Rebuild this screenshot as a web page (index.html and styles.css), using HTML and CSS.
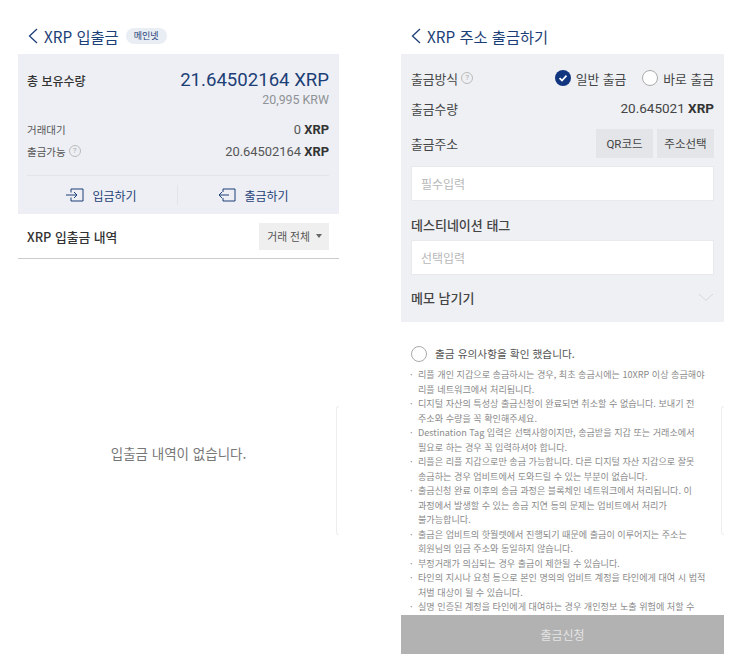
FILE: index.html
```html
<!DOCTYPE html>
<html lang="ko">
<head>
    <meta charset="UTF-8">
    <meta name="viewport" content="width=device-width, initial-scale=1.0">
    <title>XRP 입출금</title>
    <link rel="stylesheet" href="styles.css">
</head>
<body>
    <div class="screens">
        <div class="screen screen-left">
            <div class="title-bar">
                <svg class="back" width="12" height="18" viewBox="0 0 12 18"><path d="M10 2 2.5 9l7.500 7"/></svg>
                <h2>XRP 입출금</h2>
                <span class="net-badge">메인넷</span>
            </div>
            <div class="summary">
                <div class="row total-row">
                    <span class="total-label">총 보유수량</span>
                    <span class="total-value">21.64502164 XRP</span>
                </div>
                <div class="krw">20,995 KRW</div>
                <div class="row small-row wait-row">
                    <span>거래대기</span>
                    <span class="num">0 <b>XRP</b></span>
                </div>
                <div class="row small-row avail-row">
                    <span class="with-help">출금가능 <i class="help">?</i></span>
                    <span class="num">20.64502164 <b>XRP</b></span>
                </div>
                <div class="actions">
                    <a class="action">
                        <svg width="18" height="14" viewBox="0 0 18 14"><path d="M5 1h12v12H5V9.500M5 4.500V1M0 7h11M8 4l3 3-3 3"/></svg>
                        입금하기
                    </a>
                    <a class="action">
                        <svg width="18" height="14" viewBox="0 0 18 14"><path d="M5 4V1h12v12H5v-3M1 7h10M4 4 1 7l3 3"/></svg>
                        출금하기
                    </a>
                </div>
            </div>
            <div class="history-head">
                <span class="history-title">XRP 입출금 내역</span>
                <span class="filter">거래 전체 <i class="caret"></i></span>
            </div>
            <div class="empty">입출금 내역이 없습니다.</div>
            <div class="edge-handle"></div>
        </div>

        <div class="screen screen-right">
            <div class="title-bar">
                <svg class="back" width="12" height="18" viewBox="0 0 12 18"><path d="M10 2 2.500 9l7.500 7"/></svg>
                <h2>XRP 주소 출금하기</h2>
            </div>
            <form class="withdraw">
                <div class="row method-row">
                    <span class="field-label with-help">출금방식 <i class="help">?</i></span>
                    <div class="methods">
                        <span class="method">
                            <svg width="16" height="16" viewBox="0 0 16 16"><circle cx="8" cy="8" r="8" fill="#12357f"/><path d="M4.500 8.200 7 10.500l4.500-4.800" fill="none" stroke="#fff" stroke-width="1.700"/></svg>
                            일반 출금
                        </span>
                        <span class="method">
                            <i class="radio"></i>
                            바로 출금
                        </span>
                    </div>
                </div>
                <div class="row amount-row">
                    <span class="field-label">출금수량</span>
                    <span class="amount">20.645021 <b>XRP</b></span>
                </div>
                <div class="row address-row">
                    <span class="field-label">출금주소</span>
                    <div class="address-btns">
                        <span class="gray-btn qr-btn">QR코드</span>
                        <span class="gray-btn">주소선택</span>
                    </div>
                </div>
                <div class="fake-input">필수입력</div>
                <div class="field-label strong tag-label">데스티네이션 태그</div>
                <div class="fake-input">선택입력</div>
                <div class="row memo-row">
                    <span class="field-label strong">메모 남기기</span>
                    <svg width="16" height="9" viewBox="0 0 16 9"><path d="M1 1l7 6.500L15 1" fill="none" stroke="#d5d8de"/></svg>
                </div>
            </form>
            <div class="confirm">
                <i class="radio radio-big"></i>
                출금 유의사항을 확인 했습니다.
            </div>
            <ul class="notes">
                <li>리플 개인 지갑으로 송금하시는 경우, 최초 송금시에는 10XRP 이상 송금해야<br>리플 네트워크에서 처리됩니다.</li>
                <li>디지털 자산의 특성상 출금신청이 완료되면 취소할 수 없습니다. 보내기 전<br>주소와 수량을 꼭 확인해주세요.</li>
                <li>Destination Tag 입력은 선택사항이지만, 송금받을 지갑 또는 거래소에서<br>필요로 하는 경우 꼭 입력하셔야 합니다.</li>
                <li>리플은 리플 지갑으로만 송금 가능합니다. 다른 디지털 자산 지갑으로 잘못<br>송금하는 경우 업비트에서 도와드릴 수 있는 부분이 없습니다.</li>
                <li>출금신청 완료 이후의 송금 과정은 블록체인 네트워크에서 처리됩니다. 이<br>과정에서 발생할 수 있는 송금 지연 등의 문제는 업비트에서 처리가<br>불가능합니다.</li>
                <li>출금은 업비트의 핫월렛에서 진행되기 때문에 출금이 이루어지는 주소는<br>회원님의 입금 주소와 동일하지 않습니다.</li>
                <li>부정거래가 의심되는 경우 출금이 제한될 수 있습니다.</li>
                <li>타인의 지시나 요청 등으로 본인 명의의 업비트 계정을 타인에게 대여 시 법적<br>처벌 대상이 될 수 있습니다.</li>
                <li>실명 인증된 계정을 타인에게 대여하는 경우 개인정보 노출 위험에 처할 수</li>
            </ul>
            <button type="button" class="submit-btn">출금신청</button>
            <div class="edge-handle"></div>
        </div>
    </div>
</body>
</html>
```

FILE: styles.css
```css
html, body {
    height: 100%;
    overflow: hidden;
}

body {
    margin: 0;
    background: white;
    color: #333;
    font-family: "Noto Sans CJK KR", "Noto Sans", sans-serif;
}

.screens {
    display: flex;
    height: 655px;
    padding-left: 18px;
    box-sizing: border-box;
}

.screen {
    position: relative;
    display: flex;
    flex-direction: column;
    height: 655px;
}

.screen-left {
    width: 321px;
    margin-right: 62px;
}

.screen-right {
    width: 323px;
}

.row {
    display: flex;
    justify-content: space-between;
    align-items: center;
}

.title-bar {
    display: flex;
    align-items: center;
    height: 36px;
    padding: 18px 0 0 9px;
    flex: none;
}

.title-bar h2 {
    margin: 0 0 0 5px;
    font-size: 15.300px;
    font-weight: 400;
    color: #1d3f77;
}

.back {
    fill: none;
    stroke: #1d3f77;
    stroke-width: 1.3;
}

.net-badge {
    margin-left: 7px;
    padding: 2px 8px;
    background: #e9edf4;
    border-radius: 9px;
    font-size: 9px;
    line-height: 12px;
    color: #1d3f77;
}

/* left screen */
.summary {
    height: 160px;
    padding: 0 10px 0 9px;
    background: #edeff4;
    box-sizing: border-box;
}

.total-row {
    height: 40px;
    padding-top: 12px;
    box-sizing: border-box;
}

.total-label {
    font-size: 12px;
    font-weight: 500;
}

.total-value {
    font-family: Roboto, sans-serif;
    font-size: 18.600px;
    color: #1d3f77;
}

.krw {
    margin-top: -2px;
    text-align: right;
    font-family: Roboto, sans-serif;
    font-size: 12.400px;
    line-height: 16px;
    color: #8f9296;
}

.small-row {
    height: 22px;
    font-size: 10.500px;
    color: #555;
}

.wait-row {
    margin-top: 10px;
}

.num {
    font-family: Roboto, sans-serif;
    font-size: 12.900px;
    color: #555;
}

.num b {
    color: #333;
}

.with-help {
    display: flex;
    align-items: center;
    gap: 3px;
}

.help {
    display: inline-block;
    width: 10px;
    height: 10px;
    border: 1px solid #bbb;
    border-radius: 50%;
    font-family: Roboto, sans-serif;
    font-size: 8px;
    font-style: normal;
    line-height: 10px;
    text-align: center;
    color: #aaa;
}

.actions {
    display: grid;
    grid-template-columns: 1fr 1fr;
    margin-top: 13px;
    padding-top: 9px;
    border-top: 1px solid #e2e4e9;
}

.action {
    display: flex;
    justify-content: center;
    align-items: center;
    gap: 8px;
    height: 20px;
    font-size: 12px;
    color: #1d3f77;
}

.action:first-child {
    border-right: 1px solid #e2e4e9;
    padding-right: 1px;
}

.action svg {
    fill: none;
    stroke: #1d3f77;
}

.history-head {
    display: flex;
    justify-content: space-between;
    align-items: center;
    height: 44px;
    padding: 0 10px 0 9px;
    border-bottom: 1px solid #ccc;
}

.history-title {
    font-size: 12.800px;
    font-weight: 500;
}

.filter {
    display: flex;
    align-items: center;
    gap: 6px;
    height: 27px;
    padding: 0 7px 0 8px;
    background: #efefef;
    font-size: 10.800px;
    color: #555;
}

.caret {
    width: 0;
    height: 0;
    border: 3.500px solid transparent;
    border-top: 4px solid #666;
    border-bottom: 0;
}

.empty {
    margin-top: 185px;
    text-align: center;
    font-size: 13.500px;
    line-height: 18px;
    color: #777;
}

.edge-handle {
    position: absolute;
    top: 406px;
    right: 0;
    width: 3px;
    height: 129px;
    border: 1px solid #eee;
    border-right: 0;
    border-radius: 4px 0 0 4px;
    box-sizing: border-box;
}

/* right screen */
.withdraw {
    height: 268px;
    padding: 0 10px;
    background: #eef0f4;
    box-sizing: border-box;
    flex: none;
}

.field-label {
    font-size: 12.800px;
    color: #444;
}

.field-label.strong {
    font-size: 13px;
    font-weight: 500;
}

.method-row {
    height: 24px;
    padding-top: 12px;
}

.methods {
    display: flex;
    gap: 16px;
}

.method {
    display: flex;
    align-items: center;
    gap: 5px;
    font-size: 12.800px;
    color: #444;
}

.radio {
    display: inline-block;
    width: 16px;
    height: 16px;
    border: 1px solid #aaa;
    border-radius: 50%;
    background: white;
    box-sizing: border-box;
}

.amount-row {
    height: 32px;
    margin-top: 2px;
}

.amount {
    font-family: Roboto, sans-serif;
    font-size: 13.500px;
    color: #444;
}

.amount b {
    color: #333;
}

.address-row {
    height: 30px;
    margin-top: 4px;
}

.address-btns {
    display: flex;
    gap: 4px;
}

.gray-btn {
    display: flex;
    align-items: center;
    justify-content: center;
    width: 57px;
    height: 29px;
    background: #e3e5e9;
    font-size: 11.500px;
    color: #444;
}

.qr-btn {
    font-family: Roboto, "Noto Sans CJK KR", sans-serif;
}

.fake-input {
    height: 35px;
    margin-top: 8px;
    padding-left: 9px;
    background: white;
    border: 1px solid #e8e9ec;
    box-sizing: border-box;
    font-size: 12px;
    line-height: 33px;
    color: #b8b8b8;
}

.tag-label {
    margin-top: 15px;
    line-height: 18px;
}

.tag-label + .fake-input {
    margin-top: 6px;
}

.memo-row {
    height: 40px;
    margin-top: 2px;
}

.confirm {
    display: flex;
    align-items: center;
    gap: 8px;
    margin: 23px 0 0 10px;
    font-size: 10.700px;
    line-height: 17px;
    color: #555;
}

.radio-big {
    width: 16px;
    height: 16px;
}

.notes {
    flex: 1;
    min-height: 0;
    margin: 5px 0 0;
    padding: 0 0 0 17px;
    list-style: none;
    overflow: hidden;
    font-size: 9.100px;
    line-height: 14.500px;
    color: #8a8a8a;
}

.notes li {
    position: relative;
    white-space: nowrap;
}

.notes li::before {
    content: "·";
    position: absolute;
    left: -8px;
}

.submit-btn {
    flex: none;
    height: 39px;
    margin-bottom: 1px;
    padding: 0;
    border: 0;
    background: #b2b2b2;
    font-family: inherit;
    font-size: 12px;
    color: #e4e4e4;
}
```
